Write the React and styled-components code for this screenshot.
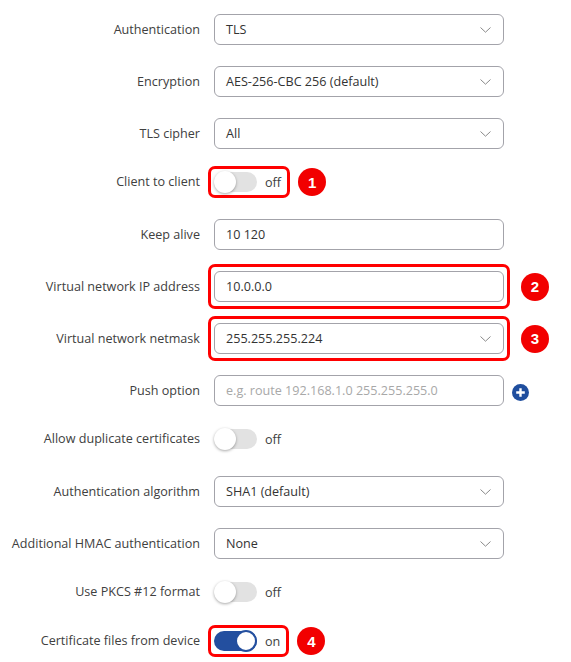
import React from 'react';
import styled, {createGlobalStyle} from 'styled-components';

const GlobalStyle = createGlobalStyle`
    body {
        margin: 0;
        background: #ffffff;
        font-family: "Open Sans", "Noto Sans", sans-serif;
    }
`;

const Form = styled.div`
    display: flex;
    flex-direction: column;
    gap: 21px;
    padding-top: 14px;
`;

const Row = styled.div`
    display: grid;
    grid-template-columns: 200px auto;
    column-gap: 14px;
    align-items: ${p => p.toggle ? 'flex-start' : 'center'};
    height: ${p => p.toggle ? '28px' : '31px'};
`;

const Label = styled.div`
    text-align: right;
    font-size: 12.6px;
    color: #404040;
    line-height: ${p => p.toggle ? '24px' : '31px'};
    white-space: nowrap;
`;

const Control = styled.div`
    display: flex;
    align-items: center;
    height: ${p => p.toggle ? '24px' : '31px'};
`;

const Field = styled.div`
    box-sizing: border-box;
    width: 290px;
    height: 31px;
    border: 1px solid #a3a3aa;
    border-radius: 6px;
    padding: 0 12px 0 11px;
    display: flex;
    align-items: center;
    justify-content: space-between;
    font-size: 12.6px;
    color: ${p => p.placeholder ? '#a8a8a8' : '#333333'};
    background: #ffffff;
`;

const Highlight = styled.div`
    display: flex;
    align-items: center;
    border: 3px solid #ff0000;
    border-radius: 7px;
    padding: ${p => p.toggle ? '3px 6px 3px 3px' : '4px 3px'};
    margin: ${p => p.toggle ? '-6px -9px -6px -6px' : '-7px -6px'};
`;

const Badge = styled.div`
    flex: none;
    width: 28px;
    height: 28px;
    border-radius: 50%;
    background: #f20000;
    color: #ffffff;
    font-family: "Liberation Sans", Arial, sans-serif;
    font-weight: bold;
    font-size: 15px;
    display: flex;
    align-items: center;
    justify-content: center;
    margin-left: ${p => p.offset}px;
`;

const Track = styled.div`
    position: relative;
    width: 43px;
    height: 20px;
    border-radius: 10px;
    background: ${p => p.on ? '#234f9f' : '#e2e2e2'};
    flex: none;
`;

const Knob = styled.div`
    position: absolute;
    top: -1px;
    left: ${p => p.on ? '21px' : '0'};
    width: 22px;
    height: 22px;
    box-sizing: border-box;
    border-radius: 50%;
    background: #ffffff;
    border: ${p => p.on ? '2px solid #234f9f' : 'none'};
    box-shadow: ${p => p.on ? 'none' : '0 1px 3px rgba(0, 0, 0, 0.35)'};
`;

const ToggleText = styled.span`
    font-size: 12.6px;
    color: #404040;
    margin-left: 8px;
`;

const AddButton = styled.div`
    width: 17px;
    height: 17px;
    margin-left: 8px;
    margin-top: 4px;
    flex: none;
`;

const Chevron = () => (
    <svg width="11" height="6" viewBox="0 0 11 6">
        <path d="M0.5 0.5 L5.5 5.2 L10.5 0.5" fill="none" stroke="#8a8a8a" strokeWidth="1"/>
    </svg>
);

const Toggle = ({on}) => (
    <>
        <Track on={on}><Knob on={on}/></Track>
        <ToggleText>{on ? 'on' : 'off'}</ToggleText>
    </>
);

const Select = ({value}) => (
    <Field>{value}<Chevron/></Field>
);

const rows = [
    {label: 'Authentication', kind: 'select', value: 'TLS'},
    {label: 'Encryption', kind: 'select', value: 'AES-256-CBC 256 (default)'},
    {label: 'TLS cipher', kind: 'select', value: 'All'},
    {label: 'Client to client', kind: 'toggle', on: false, badge: 1},
    {label: 'Keep alive', kind: 'input', value: '10 120'},
    {label: 'Virtual network IP address', kind: 'input', value: '10.0.0.0', badge: 2},
    {label: 'Virtual network netmask', kind: 'select', value: '255.255.255.224', badge: 3},
    {label: 'Push option', kind: 'input', placeholder: 'e.g. route 192.168.1.0 255.255.255.0', add: true},
    {label: 'Allow duplicate certificates', kind: 'toggle', on: false},
    {label: 'Authentication algorithm', kind: 'select', value: 'SHA1 (default)'},
    {label: 'Additional HMAC authentication', kind: 'select', value: 'None'},
    {label: 'Use PKCS #12 format', kind: 'toggle', on: false},
    {label: 'Certificate files from device', kind: 'toggle', on: true, badge: 4},
];

const renderControl = (row) => {
    if (row.kind === 'toggle') return <Toggle on={row.on}/>;
    if (row.kind === 'select') return <Select value={row.value}/>;
    return <Field placeholder={row.placeholder ? 1 : 0}>{row.value || row.placeholder}</Field>;
};

export default function App() {
    return (
        <>
            <GlobalStyle/>
            <Form>
                {rows.map(row => {
                    const toggle = row.kind === 'toggle';
                    return (
                        <Row key={row.label} toggle={toggle ? 1 : 0}>
                            <Label toggle={toggle ? 1 : 0}>{row.label}</Label>
                            <Control toggle={toggle ? 1 : 0}>
                                {row.badge
                                    ? <Highlight toggle={toggle ? 1 : 0}>{renderControl(row)}</Highlight>
                                    : renderControl(row)}
                                {row.badge && <Badge offset={toggle ? 17 : 17}>{row.badge}</Badge>}
                                {row.add &&
                                <AddButton>
                                    <svg width="17" height="17" viewBox="0 0 17 17">
                                        <circle cx="8.5" cy="8.5" r="8.5" fill="#1f4e9e"/>
                                        <path d="M8.5 4.2 V12.8 M4.2 8.5 H12.8" stroke="#ffffff" strokeWidth="2.4"/>
                                    </svg>
                                </AddButton>
                                }
                            </Control>
                        </Row>
                    );
                })}
            </Form>
        </>
    );
}
